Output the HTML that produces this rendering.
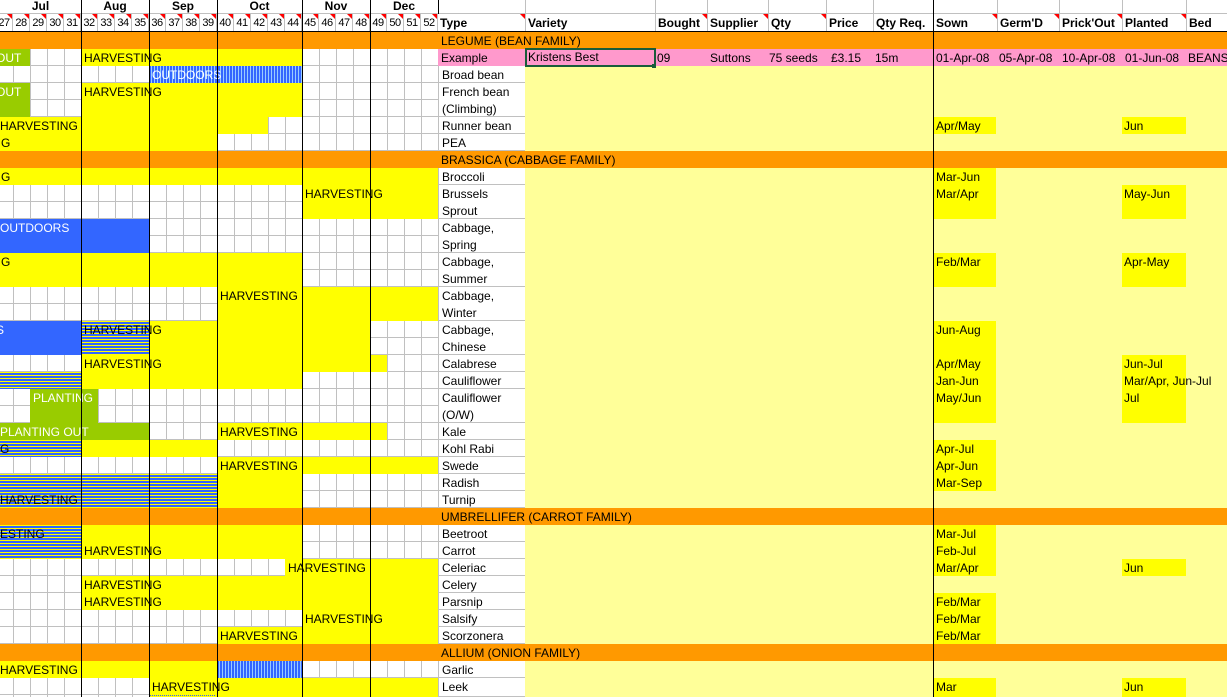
<!DOCTYPE html>
<html><head><meta charset="utf-8">
<style>
*{margin:0;padding:0;box-sizing:border-box}
body{width:1227px;height:697px;overflow:hidden;position:relative;background:#fff;font-family:"Liberation Sans",Arial,sans-serif;font-size:12px;color:#000}
div{position:absolute}
.t{white-space:nowrap;line-height:17px;padding-left:3px;overflow:visible}
.t,.ty{line-height:17px}
.t{padding-top:1px}
.y{background:#ffff00}
.g{background:#99cc00;color:#fff}
.b{background:#3366ff;color:#fff}
.o{background:#ff9900}
.hs{background:repeating-linear-gradient(to bottom,#ffff00 0 1px,#3366ff 1px 3px)}
.vs{background:repeating-linear-gradient(to right,#3366ff 0 2px,#99ccff 2px 3px);color:#fff}
.ml{width:1px;background:#000}
.ty{left:438px;width:87px;background:#fff;border-bottom:1px solid #c0c0c0;border-left:1px solid #c0c0c0;padding-left:3px;padding-top:1px;white-space:nowrap}
.hd{top:14px;height:18px;font-family:"Liberation Sans Narrow","Liberation Sans",sans-serif;font-weight:bold;font-size:12px;line-height:19px;padding-left:2px;border-right:1px solid #c0c0c0;white-space:nowrap}
.tri{position:absolute;top:0;right:0;width:0;height:0;border-top:5px solid #f00;border-left:5px solid transparent}
.wk{top:14px;height:18px;width:17px;border-right:1px solid #c0c0c0;font-size:11px;line-height:19px;text-align:center;letter-spacing:-0.5px}
.mo{top:0;height:14px;font-weight:bold;font-size:12px;line-height:13px;text-align:center}
.sw{left:934px;width:62px}
.pl{left:1122px;width:64px}
</style></head><body>
<div style="left:0;top:32px;width:438px;height:665px;background:
repeating-linear-gradient(to right,transparent 0 13px,#c0c0c0 13px 14px,transparent 14px 17px),
repeating-linear-gradient(to bottom,transparent 0 16px,#c0c0c0 16px 17px);"></div>
<div style="left:525px;top:32px;width:702px;height:665px;background:#ffff99"></div>
<div style="left:0;top:0;width:1227px;height:14px;border-bottom:1px solid #c0c0c0"></div>
<div class="mo" style="left:0;width:81px">Jul</div>
<div class="mo" style="left:81px;width:68px">Aug</div>
<div class="mo" style="left:149px;width:68px">Sep</div>
<div class="mo" style="left:217px;width:85px">Oct</div>
<div class="mo" style="left:302px;width:68px">Nov</div>
<div class="mo" style="left:370px;width:68px">Dec</div>
<div class="wk" style="left:-4px">27<span class="tri"></span></div>
<div class="wk" style="left:13px">28<span class="tri"></span></div>
<div class="wk" style="left:30px">29<span class="tri"></span></div>
<div class="wk" style="left:47px">30<span class="tri"></span></div>
<div class="wk" style="left:64px">31<span class="tri"></span></div>
<div class="wk" style="left:81px">32<span class="tri"></span></div>
<div class="wk" style="left:98px">33<span class="tri"></span></div>
<div class="wk" style="left:115px">34<span class="tri"></span></div>
<div class="wk" style="left:132px">35<span class="tri"></span></div>
<div class="wk" style="left:149px">36<span class="tri"></span></div>
<div class="wk" style="left:166px">37<span class="tri"></span></div>
<div class="wk" style="left:183px">38<span class="tri"></span></div>
<div class="wk" style="left:200px">39<span class="tri"></span></div>
<div class="wk" style="left:217px">40<span class="tri"></span></div>
<div class="wk" style="left:234px">41<span class="tri"></span></div>
<div class="wk" style="left:251px">42<span class="tri"></span></div>
<div class="wk" style="left:268px">43<span class="tri"></span></div>
<div class="wk" style="left:285px">44<span class="tri"></span></div>
<div class="wk" style="left:302px">45<span class="tri"></span></div>
<div class="wk" style="left:319px">46<span class="tri"></span></div>
<div class="wk" style="left:336px">47<span class="tri"></span></div>
<div class="wk" style="left:353px">48<span class="tri"></span></div>
<div class="wk" style="left:370px">49<span class="tri"></span></div>
<div class="wk" style="left:387px">50<span class="tri"></span></div>
<div class="wk" style="left:404px">51<span class="tri"></span></div>
<div class="wk" style="left:421px">52<span class="tri"></span></div>
<div style="left:525px;top:0;width:1px;height:14px;background:#c0c0c0"></div>
<div style="left:655px;top:0;width:1px;height:14px;background:#c0c0c0"></div>
<div style="left:707px;top:0;width:1px;height:14px;background:#c0c0c0"></div>
<div style="left:768px;top:0;width:1px;height:14px;background:#c0c0c0"></div>
<div style="left:826px;top:0;width:1px;height:14px;background:#c0c0c0"></div>
<div style="left:873px;top:0;width:1px;height:14px;background:#c0c0c0"></div>
<div style="left:997px;top:0;width:1px;height:14px;background:#c0c0c0"></div>
<div style="left:1059px;top:0;width:1px;height:14px;background:#c0c0c0"></div>
<div style="left:1122px;top:0;width:1px;height:14px;background:#c0c0c0"></div>
<div style="left:1186px;top:0;width:1px;height:14px;background:#c0c0c0"></div>
<div class="hd" style="left:438px;width:88px">Type<span class="tri"></span></div>
<div class="hd" style="left:526px;width:130px">Variety</div>
<div class="hd" style="left:656px;width:52px">Bought<span class="tri"></span></div>
<div class="hd" style="left:708px;width:61px">Supplier<span class="tri"></span></div>
<div class="hd" style="left:769px;width:58px">Qty<span class="tri"></span></div>
<div class="hd" style="left:827px;width:47px">Price</div>
<div class="hd" style="left:874px;width:60px">Qty Req.</div>
<div class="hd" style="left:934px;width:64px">Sown<span class="tri"></span></div>
<div class="hd" style="left:998px;width:62px">Germ'D<span class="tri"></span></div>
<div class="hd" style="left:1060px;width:63px">Prick'Out<span class="tri"></span></div>
<div class="hd" style="left:1123px;width:64px">Planted<span class="tri"></span></div>
<div class="hd" style="left:1187px;width:50px;border-right:none">Bed</div>
<div style="left:0;top:31px;width:1227px;height:1px;background:#000"></div>

<div class="o t" style="left:0;top:32px;width:1227px;height:17px;padding-left:441px">LEGUME (BEAN FAMILY)</div>
<div class="o t" style="left:0;top:151px;width:1227px;height:17px;padding-left:441px">BRASSICA (CABBAGE FAMILY)</div>
<div class="o t" style="left:0;top:508px;width:1227px;height:17px;padding-left:441px">UMBRELLIFER (CARROT FAMILY)</div>
<div class="o t" style="left:0;top:644px;width:1227px;height:17px;padding-left:441px">ALLIUM (ONION FAMILY)</div>

<div class="g t" style="left:-4px;top:49px;width:34px;height:17px;padding-left:0">OUT</div>
<div class="y t" style="left:81px;top:49px;width:221px;height:17px">HARVESTING</div>
<div class="vs t" style="left:149px;top:66px;width:153px;height:17px">OUTDOORS</div>
<div class="g t" style="left:-4px;top:83px;width:34px;height:34px;padding-left:0">OUT</div>
<div class="y t" style="left:81px;top:83px;width:221px;height:34px">HARVESTING</div>
<div class="y t" style="left:-4px;top:117px;width:272px;height:17px;padding-left:4px">HARVESTING</div>
<div class="y t" style="left:-4px;top:134px;width:221px;height:17px;padding-left:5px">G</div>
<div class="y t" style="left:-4px;top:168px;width:442px;height:17px;padding-left:5px">G</div>
<div class="y t" style="left:302px;top:185px;width:136px;height:34px">HARVESTING</div>
<div class="b t" style="left:-4px;top:219px;width:153px;height:34px;padding-left:4px">OUTDOORS</div>
<div class="y t" style="left:-4px;top:253px;width:306px;height:34px;padding-left:5px">G</div>
<div class="y t" style="left:217px;top:287px;width:221px;height:34px">HARVESTING</div>
<div class="y" style="left:149px;top:321px;width:221px;height:34px"></div>
<div class="b t" style="left:-4px;top:321px;width:85px;height:34px;padding-left:0">S</div>
<div class="hs t" style="left:81px;top:321px;width:68px;height:34px">HARVESTING</div>
<div class="y t" style="left:81px;top:355px;width:306px;height:17px">HARVESTING</div>
<div class="y" style="left:81px;top:372px;width:221px;height:17px"></div>
<div class="hs" style="left:-4px;top:372px;width:85px;height:17px"></div>
<div class="g t" style="left:30px;top:389px;width:68px;height:34px">PLANTING</div>
<div class="g t" style="left:-4px;top:423px;width:153px;height:17px;padding-left:4px">PLANTING OUT</div>
<div class="y t" style="left:217px;top:423px;width:170px;height:17px">HARVESTING</div>
<div class="hs t" style="left:-4px;top:440px;width:85px;height:17px;padding-left:4px">G</div>
<div class="y" style="left:81px;top:440px;width:136px;height:17px"></div>
<div class="y t" style="left:217px;top:457px;width:221px;height:17px">HARVESTING</div>
<div class="y" style="left:217px;top:474px;width:85px;height:34px"></div>
<div class="hs t" style="left:-4px;top:474px;width:221px;height:34px;padding-left:4px;padding-top:18px">HARVESTING</div>
<div class="hs t" style="left:-4px;top:525px;width:85px;height:34px;padding-left:4px">ESTING</div>
<div class="y t" style="left:81px;top:525px;width:221px;height:34px;padding-top:18px">HARVESTING</div>
<div class="y t" style="left:285px;top:559px;width:153px;height:17px">HARVESTING</div>
<div class="y t" style="left:81px;top:576px;width:357px;height:17px">HARVESTING</div>
<div class="y t" style="left:81px;top:593px;width:357px;height:17px">HARVESTING</div>
<div class="y t" style="left:302px;top:610px;width:136px;height:17px">HARVESTING</div>
<div class="y t" style="left:217px;top:627px;width:221px;height:17px">HARVESTING</div>
<div class="y t" style="left:-4px;top:661px;width:221px;height:17px;padding-left:4px">HARVESTING</div>
<div class="vs" style="left:217px;top:661px;width:85px;height:17px"></div>
<div class="y t" style="left:149px;top:678px;width:289px;height:19px">HARVESTING</div>
<div style="left:149px;top:695px;width:66px;height:1px;border-top:1px dotted #3366ff"></div>

<div class="ml" style="left:81px;top:0;height:697px"></div>
<div class="ml" style="left:149px;top:0;height:697px"></div>
<div class="ml" style="left:217px;top:0;height:697px"></div>
<div class="ml" style="left:302px;top:0;height:697px"></div>
<div class="ml" style="left:370px;top:0;height:697px"></div>
<div class="ml" style="left:438px;top:0;height:14px"></div>

<div style="left:438px;top:49px;width:789px;height:17px;background:#ff99cc"></div>
<div class="t" style="left:438px;top:49px">Example</div>
<div class="t" style="left:525px;top:48px;width:131px;height:19px;border:2px solid #1a5c3a;line-height:15px;padding-left:1px;padding-top:0">Kristens Best</div>
<div style="left:652px;top:64px;width:4px;height:4px;background:#1a5c3a"></div>
<div class="t" style="left:654px;top:49px">09</div>
<div class="t" style="left:707px;top:49px">Suttons</div>
<div class="t" style="left:766px;top:49px">75 seeds</div>
<div class="t" style="left:828px;top:49px">£3.15</div>
<div class="t" style="left:872px;top:49px">15m</div>
<div class="t" style="left:933px;top:49px">01-Apr-08</div>
<div class="t" style="left:996px;top:49px">05-Apr-08</div>
<div class="t" style="left:1059px;top:49px">10-Apr-08</div>
<div class="t" style="left:1122px;top:49px">01-Jun-08</div>
<div class="t" style="left:1185px;top:49px">BEANS</div>

<div class="ty" style="top:66px;height:17px">Broad bean</div>
<div class="ty" style="top:83px;height:34px">French bean<br>(Climbing)</div>
<div class="ty" style="top:117px;height:17px">Runner bean</div>
<div class="ty" style="top:134px;height:17px">PEA</div>
<div class="ty" style="top:168px;height:17px">Broccoli</div>
<div class="ty" style="top:185px;height:34px">Brussels<br>Sprout</div>
<div class="ty" style="top:219px;height:34px">Cabbage,<br>Spring</div>
<div class="ty" style="top:253px;height:34px">Cabbage,<br>Summer</div>
<div class="ty" style="top:287px;height:34px">Cabbage,<br>Winter</div>
<div class="ty" style="top:321px;height:34px">Cabbage,<br>Chinese</div>
<div class="ty" style="top:355px;height:17px">Calabrese</div>
<div class="ty" style="top:372px;height:17px">Cauliflower</div>
<div class="ty" style="top:389px;height:34px">Cauliflower<br>(O/W)</div>
<div class="ty" style="top:423px;height:17px">Kale</div>
<div class="ty" style="top:440px;height:17px">Kohl Rabi</div>
<div class="ty" style="top:457px;height:17px">Swede</div>
<div class="ty" style="top:474px;height:17px">Radish</div>
<div class="ty" style="top:491px;height:17px">Turnip</div>
<div class="ty" style="top:525px;height:17px">Beetroot</div>
<div class="ty" style="top:542px;height:17px">Carrot</div>
<div class="ty" style="top:559px;height:17px">Celeriac</div>
<div class="ty" style="top:576px;height:17px">Celery</div>
<div class="ty" style="top:593px;height:17px">Parsnip</div>
<div class="ty" style="top:610px;height:17px">Salsify</div>
<div class="ty" style="top:627px;height:17px">Scorzonera</div>
<div class="ty" style="top:661px;height:17px">Garlic</div>
<div class="ty" style="top:678px;height:19px">Leek</div>

<div class="y t sw" style="top:117px;height:17px;padding-left:2px">Apr/May</div>
<div class="y t sw" style="top:168px;height:51px;padding-left:2px">Mar-Jun<br>Mar/Apr</div>
<div class="y t sw" style="top:253px;height:34px;padding-left:2px">Feb/Mar</div>
<div class="y t sw" style="top:321px;height:102px;padding-left:2px">Jun-Aug<br><br>Apr/May<br>Jan-Jun<br>May/Jun</div>
<div class="y t sw" style="top:440px;height:51px;padding-left:2px">Apr-Jul<br>Apr-Jun<br>Mar-Sep</div>
<div class="y t sw" style="top:525px;height:51px;padding-left:2px">Mar-Jul<br>Feb-Jul<br>Mar/Apr</div>
<div class="y t sw" style="top:593px;height:51px;padding-left:2px">Feb/Mar<br>Feb/Mar<br>Feb/Mar</div>
<div class="y t sw" style="top:678px;height:19px;padding-left:2px">Mar</div>
<div class="y t pl" style="top:117px;height:17px;padding-left:2px">Jun</div>
<div class="y t pl" style="top:185px;height:34px;padding-left:2px">May-Jun</div>
<div class="y t pl" style="top:253px;height:34px;padding-left:2px">Apr-May</div>
<div class="y t pl" style="top:355px;height:68px;padding-left:2px">Jun-Jul<br>Mar/Apr, Jun-Jul<br>Jul</div>
<div class="y t pl" style="top:559px;height:17px;padding-left:2px">Jun</div>
<div class="y t pl" style="top:678px;height:19px;padding-left:2px">Jun</div>

<div class="ml" style="left:933px;top:0;height:697px"></div>
</body></html>
